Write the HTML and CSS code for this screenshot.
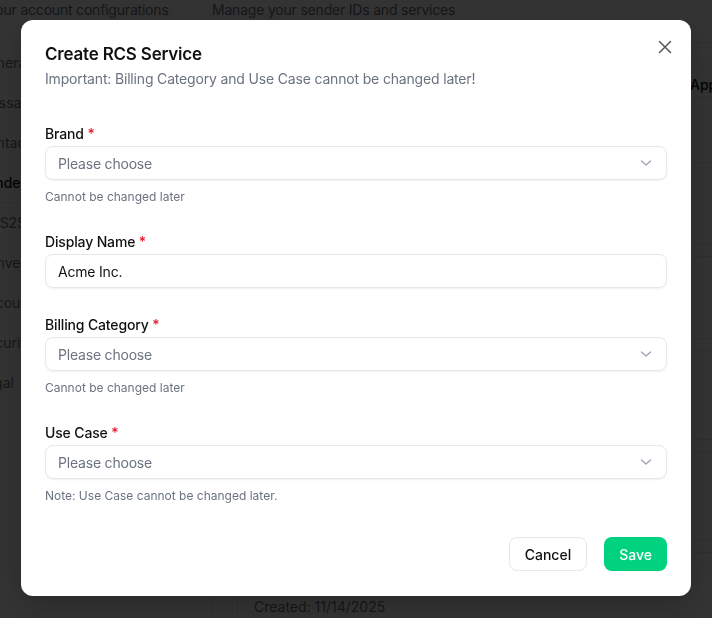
FILE: index.html
```html
<!DOCTYPE html>
<html lang="en">
<head>
  <meta charset="UTF-8">
  <meta name="viewport" content="width=device-width, initial-scale=1.0">
  <title>Settings - Sender IDs</title>
  <link rel="stylesheet" href="styles.css">
</head>
<body>
  <div class="app">
    <aside class="sidebar">
      <p class="page-sub">Manage your account configurations</p>
      <nav class="nav">
        <a class="nav-item">General</a>
        <a class="nav-item">Messages</a>
        <a class="nav-item">Contacts</a>
        <a class="nav-item active">Senders</a>
        <a class="nav-item">SMS2S</a>
        <a class="nav-item">Conversations</a>
        <a class="nav-item">Account</a>
        <a class="nav-item">Security</a>
        <a class="nav-item">Legal</a>
      </nav>
    </aside>
    <main class="main">
      <p class="page-sub">Manage your sender IDs and services</p>
      <div class="tabs"></div>
      <div class="table-head">
        <span class="col-status">Approved</span>
      </div>
      <div class="group">
        <div class="card"></div>
        <div class="card"></div>
        <div class="card tall"></div>
        <div class="card tall"></div>
        <div class="card last">
          <div class="card-inner">Created: 11/14/2025</div>
        </div>
      </div>
    </main>
  </div>

  <!-- Create RCS Service modal -->
  <div class="overlay">
    <div class="modal">
      <button class="close-btn" aria-label="Close">
        <svg width="16" height="16" viewBox="0 0 16 16" fill="none" stroke="currentColor" stroke-width="1.5" stroke-linecap="round">
          <path d="M2.5 2.5l11 11M13.5 2.5l-11 11"/>
        </svg>
      </button>
      <h2 class="modal-title">Create RCS Service</h2>
      <p class="modal-sub">Important: Billing Category and Use Case cannot be changed later!</p>

      <form class="form">
        <div class="field">
          <label class="label">Brand <span class="req">*</span></label>
          <div class="select">
            <span class="placeholder">Please choose</span>
            <svg class="chevron" width="12" height="8" viewBox="0 0 12 8" fill="none" stroke="currentColor" stroke-width="1.3" stroke-linecap="round" stroke-linejoin="round">
              <path d="M1.5 2l4.5 4 4.5-4"/>
            </svg>
          </div>
          <p class="hint">Cannot be changed later</p>
        </div>

        <div class="field">
          <label class="label">Display Name <span class="req">*</span></label>
          <div class="input">Acme Inc.</div>
        </div>

        <div class="field">
          <label class="label">Billing Category <span class="req">*</span></label>
          <div class="select">
            <span class="placeholder">Please choose</span>
            <svg class="chevron" width="12" height="8" viewBox="0 0 12 8" fill="none" stroke="currentColor" stroke-width="1.3" stroke-linecap="round" stroke-linejoin="round">
              <path d="M1.5 2l4.5 4 4.5-4"/>
            </svg>
          </div>
          <p class="hint">Cannot be changed later</p>
        </div>

        <div class="field">
          <label class="label">Use Case <span class="req">*</span></label>
          <div class="select">
            <span class="placeholder">Please choose</span>
            <svg class="chevron" width="12" height="8" viewBox="0 0 12 8" fill="none" stroke="currentColor" stroke-width="1.3" stroke-linecap="round" stroke-linejoin="round">
              <path d="M1.5 2l4.5 4 4.5-4"/>
            </svg>
          </div>
          <p class="hint">Note: Use Case cannot be changed later.</p>
        </div>
      </form>

      <div class="actions">
        <button class="btn btn-outline">Cancel</button>
        <button class="btn btn-primary">Save</button>
      </div>
    </div>
  </div>
</body>
</html>
```

FILE: styles.css
```css
* {
  box-sizing: border-box;
}
body {
  margin: 0;
  font-family: 'Inter', 'Liberation Sans', sans-serif;
  background: #fff;
  color: #111;
  overflow: hidden;
}

/* Page behind the modal */
.app {
  display: flex;
  gap: 24px;
  margin-left: -68px;
}
.sidebar {
  width: 256px;
  flex-shrink: 0;
}
.page-sub {
  margin: 0;
  font-size: 14px;
  line-height: 19px;
  letter-spacing: -0.2px;
  color: #6b7280;
}
.nav {
  display: flex;
  flex-direction: column;
  padding: 24px 0 0 46px;
}
.nav-item {
  display: block;
  height: 40px;
  line-height: 40px;
  font-size: 14px;
  color: #6b7280;
}
.nav-item.active {
  color: #111;
  font-weight: 500;
  border-bottom: 1px solid #e5e7eb;
}
.main {
  flex: 1;
}
.tabs {
  height: 24px;
  border-bottom: 1px solid #e5e7eb;
}
.table-head {
  height: 55px;
  border-bottom: 1px solid #e5e7eb;
  display: flex;
  justify-content: flex-end;
  align-items: flex-end;
  padding: 0 0 4px;
  font-size: 14px;
  font-weight: 500;
  color: #111;
}
.col-status {
  width: 22px;
  overflow: hidden;
  white-space: nowrap;
}
.group {
  margin-top: 64px;
  border-left: 1px solid #e5e7eb;
  padding-left: 24px;
  display: flex;
  flex-direction: column;
  gap: 11px;
}
.card {
  height: 83px;
  border: 1px solid #e5e7eb;
  border-right: none;
}
.card.tall {
  height: 90px;
}
.card.last {
  height: 80px;
}
.card-inner {
  padding: 45px 16px 0;
  font-size: 14px;
  color: #6b7280;
}

/* Modal */
.overlay {
  position: fixed;
  inset: 0;
  background: rgba(0, 0, 0, 0.8);
  display: flex;
  align-items: center;
  justify-content: center;
}
.modal {
  position: relative;
  width: 670px;
  background: #fff;
  border-radius: 12px;
  padding: 21px 24px 25px;
  margin-bottom: 2px;
  box-shadow: 0 10px 30px rgba(0, 0, 0, 0.2);
}
.close-btn {
  position: absolute;
  top: 19px;
  right: 18px;
  padding: 0;
  border: none;
  background: none;
  color: #555;
  display: flex;
}
.modal-title {
  margin: 0;
  font-size: 17px;
  line-height: 26px;
  font-weight: 600;
  letter-spacing: -0.2px;
  color: #111;
}
.modal-sub {
  margin: 2px 0 0;
  font-size: 14px;
  line-height: 20px;
  letter-spacing: -0.17px;
  color: #6b7280;
}
.form {
  display: flex;
  flex-direction: column;
  gap: 27px;
  margin-top: 35px;
}
.field {
  display: flex;
  flex-direction: column;
}
.label {
  font-size: 14px;
  line-height: 20px;
  font-weight: 500;
  letter-spacing: -0.15px;
  color: #111;
  margin-bottom: 2px;
}
.req {
  color: #e11d2e;
}
.select, .input {
  height: 34px;
  border: 1px solid #e5e7eb;
  border-radius: 8px;
  box-shadow: 0 1px 2px rgba(0, 0, 0, 0.06);
  display: flex;
  align-items: center;
  padding: 0 12px;
  font-size: 14px;
  letter-spacing: -0.2px;
}
.select {
  justify-content: space-between;
}
.placeholder {
  color: #6b7280;
}
.input {
  color: #111;
}
.chevron {
  color: #9ca3af;
  margin-right: 2px;
}
.hint {
  margin: 9px 0 0;
  font-size: 12px;
  line-height: 16px;
  color: #6b7280;
}
.actions {
  display: flex;
  justify-content: flex-end;
  gap: 17px;
  margin-top: 33px;
}
.btn {
  height: 34px;
  padding: 0 15px;
  border-radius: 8px;
  font-family: inherit;
  font-size: 14px;
  font-weight: 500;
  cursor: pointer;
}
.btn-outline {
  background: #fff;
  color: #111;
  border: 1px solid #e5e7eb;
}
.btn-primary {
  background: #00d27f;
  color: #fff;
  border: none;
}
```
